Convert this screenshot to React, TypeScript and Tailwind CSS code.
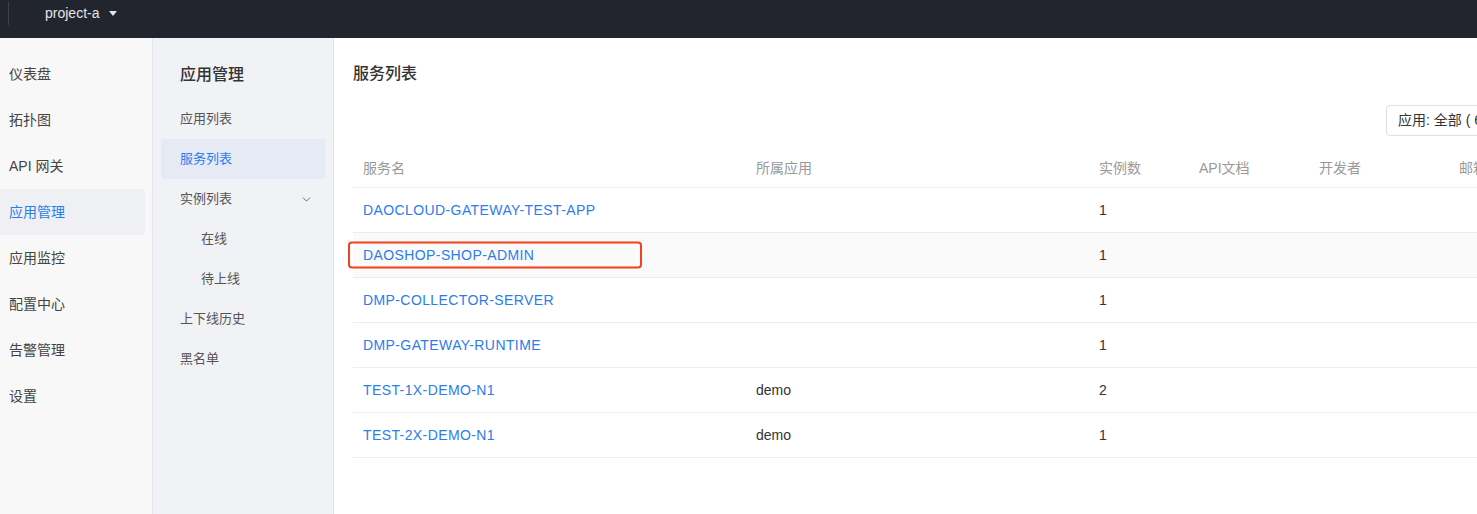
import { ChevronDown } from "lucide-react";

const mainNav = ["仪表盘", "拓扑图", "API 网关", "应用管理", "应用监控", "配置中心", "告警管理", "设置"];

interface SubItem {
  label: string;
  active?: boolean;
  indent?: boolean;
  expand?: boolean;
}

const subNav: SubItem[] = [
  { label: "应用列表" },
  { label: "服务列表", active: true },
  { label: "实例列表", expand: true },
  { label: "在线", indent: true },
  { label: "待上线", indent: true },
  { label: "上下线历史" },
  { label: "黑名单" },
];

const services = [
  { name: "DAOCLOUD-GATEWAY-TEST-APP", app: "", count: 1 },
  { name: "DAOSHOP-SHOP-ADMIN", app: "", count: 1, marked: true },
  { name: "DMP-COLLECTOR-SERVER", app: "", count: 1 },
  { name: "DMP-GATEWAY-RUNTIME", app: "", count: 1 },
  { name: "TEST-1X-DEMO-N1", app: "demo", count: 2 },
  { name: "TEST-2X-DEMO-N1", app: "demo", count: 1 },
];

const cols = "grid grid-cols-[393px_343px_100px_120px_140px_117px]";

const App = () => {
  return (
    <div
      className="h-screen w-full flex flex-col overflow-hidden bg-white text-[#333]"
      style={{ fontFamily: '"Liberation Sans", "Noto Sans CJK SC", sans-serif' }}
    >
      {/* top bar */}
      <div className="h-[38px] shrink-0 bg-[#22252e] flex items-start">
        <div className="ml-[8px] mt-[2px] w-px h-[23px] bg-[#3b404c]" />
        <div className="ml-[36px] h-[26px] flex items-center gap-x-[10px] text-[14px] text-[#e4e6ea]">
          <span>project-a</span>
          <span className="w-0 h-0 border-x-[4px] border-x-transparent border-t-[5px] border-t-[#e4e6ea]" />
        </div>
      </div>

      <div className="flex flex-1 min-h-0">
        {/* main nav */}
        <div className="w-[153px] shrink-0 bg-[#f8f8f8] border-r border-[#e4e6eb] pt-[13px]">
          {mainNav.map((label) => (
            <div
              key={label}
              className={
                "h-[46px] w-[145px] flex items-center pl-[9px] text-[14px] rounded-r-[3px] " +
                (label === "应用管理" ? "bg-[#eff0f4] text-[#2b7deb]" : "text-[#444]")
              }
            >
              {label}
            </div>
          ))}
        </div>

        {/* sub nav */}
        <div className="w-[181px] shrink-0 bg-[#f1f2f6] border-r border-[#e1e3e8] pt-[22px] px-[8px]">
          <div className="h-[30px] flex items-center pl-[19px] text-[16px] font-medium text-[#333]">
            应用管理
          </div>
          <div className="mt-[9px]">
            {subNav.map((item) => (
              <div
                key={item.label}
                className={
                  "h-[40px] flex items-center justify-between pr-[12px] text-[13px] rounded-[3px] " +
                  (item.indent ? "pl-[40px] " : "pl-[19px] ") +
                  (item.active ? "bg-[#e5eaf4] text-[#2b7deb]" : "text-[#555]")
                }
              >
                <span>{item.label}</span>
                {item.expand && <ChevronDown size={13} strokeWidth={1.8} className="text-[#666]" />}
              </div>
            ))}
          </div>
        </div>

        {/* content */}
        <div className="flex-1 min-w-0 overflow-hidden pl-[19px]">
          <div className="w-[1213px]">
            <div className="h-[30px] mt-[21px] flex items-center text-[16px] font-medium text-[#333]">
              服务列表
            </div>
            <div className="mt-[16px] flex justify-end">
              <div className="w-[180px] h-[31px] border border-[#dcdfe6] rounded-[4px] flex items-center pl-[11px] text-[14px] text-[#333]">
                应用: 全部 ( 6 )
              </div>
            </div>

            <div className="mt-[14px] text-[14px]">
              <div className={cols + " h-[38px] items-center border-b border-[#ebedf0] text-[#999]"}>
                <div className="pl-[10px]">服务名</div>
                <div className="pl-[10px]">所属应用</div>
                <div className="pl-[10px]">实例数</div>
                <div className="pl-[10px]">API文档</div>
                <div className="pl-[10px]">开发者</div>
                <div className="pl-[10px]">邮箱</div>
              </div>
              {services.map((s) => (
                <div
                  key={s.name}
                  className={
                    cols +
                    " h-[45px] items-center border-b border-[#ebedf0] " +
                    (s.marked ? "bg-[#fafafa]" : "")
                  }
                >
                  <div className="pl-[10px] relative">
                    {s.marked && (
                      <span className="absolute left-[-5px] top-1/2 -translate-y-1/2 w-[294px] h-[27px] border-2 border-[#f2411b] rounded-[4px]" />
                    )}
                    <span className="text-[#2b7deb] tracking-[0.4px]">{s.name}</span>
                  </div>
                  <div className="pl-[10px]">{s.app}</div>
                  <div className="pl-[10px]">{s.count}</div>
                  <div />
                  <div />
                  <div />
                </div>
              ))}
            </div>
          </div>
        </div>
      </div>
    </div>
  );
};

export default App;
